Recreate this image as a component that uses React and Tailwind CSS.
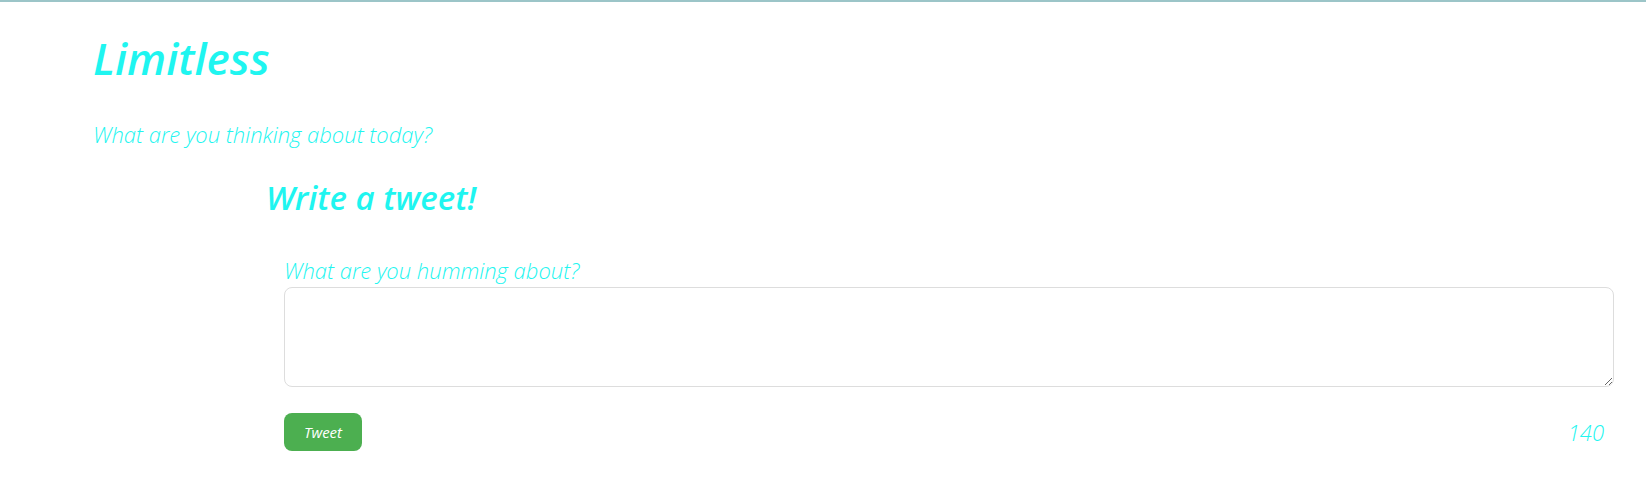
import React, { useState } from "react";

const font = { fontFamily: '"Open Sans", "Noto Sans", sans-serif' };

export default function App() {
  const [text, setText] = useState("");
  const left = 140 - text.length;

  return (
    <div className="min-h-[482px] bg-white border-t-2 border-[#9cc5c8] text-[#1ff5f0]" style={font}>
      <div className="pl-[93px] pr-[32px]">
        <h1 className="mt-[30px] text-[44px] leading-[52px] font-semibold italic">Limitless</h1>
        <p className="mt-[35px] text-[22px] leading-[30px] font-light italic">
          What are you thinking about today?
        </p>

        <div className="ml-[173px]">
          <h2 className="mt-[27px] text-[33px] leading-[44px] font-semibold italic">Write a tweet!</h2>

          <div className="ml-[18px] mt-[35px]">
            <label className="block text-[22px] leading-[30px] font-light italic">
              What are you humming about?
            </label>
            <textarea
              value={text}
              onChange={(e) => setText(e.target.value)}
              className="block w-full h-[100px] mt-[2px] border border-[#dddddd] rounded-[8px] bg-white focus:outline-none"
            />
            <div className="mt-[26px] flex items-center justify-between">
              <button className="w-[78px] h-[38px] rounded-[8px] bg-[#4caf50] text-white text-[15px] font-normal italic">
                Tweet
              </button>
              <span className="mr-[10px] text-[22px] font-light italic">{left}</span>
            </div>
          </div>
        </div>
      </div>
    </div>
  );
}
